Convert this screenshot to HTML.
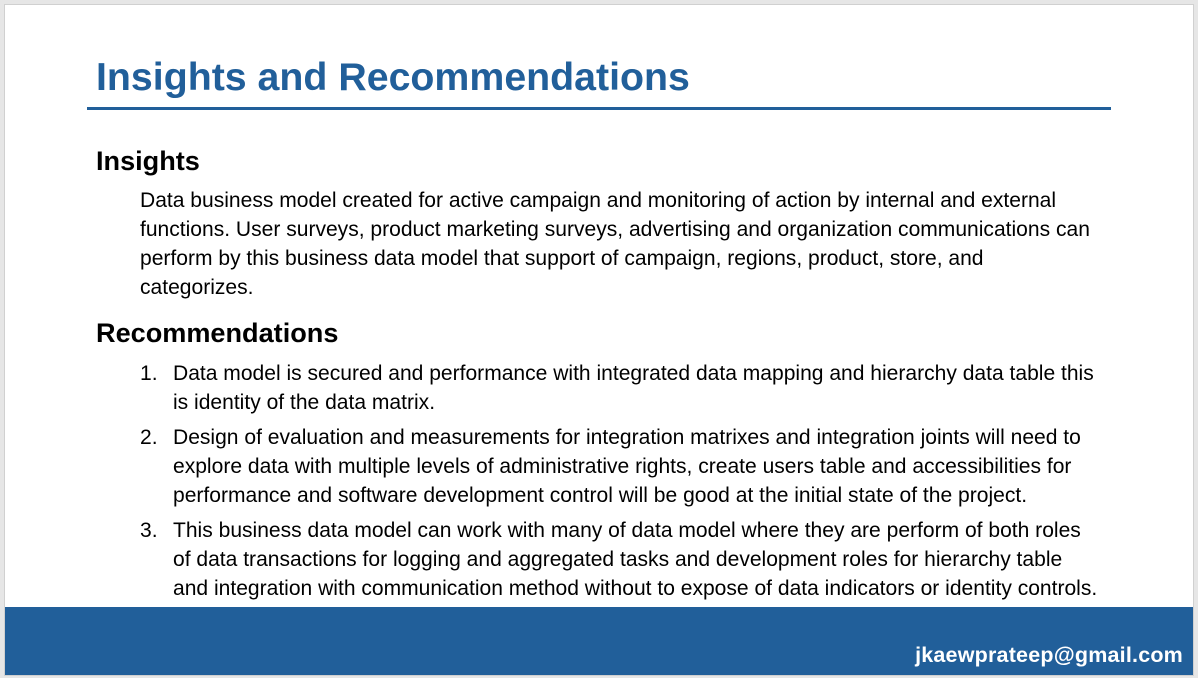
<!DOCTYPE html>
<html><head><style>
body{margin:0;width:1198px;height:678px;background:#e6e6e6;position:relative;overflow:hidden;font-family:"Liberation Sans",Arial,sans-serif;}
.slide{position:absolute;left:5px;top:5px;width:1188px;height:670px;background:#fff;box-shadow:0 0 0 1px #d0d0d0;}
.t{position:absolute;left:91px;top:50px;font-size:39.3px;font-weight:bold;color:#215f9a;white-space:nowrap;}
.rule{position:absolute;left:82px;top:102px;width:1024px;height:3px;background:#215f9a;}
h2{position:absolute;margin:0;font-size:27.1px;font-weight:bold;color:#000;left:91px;white-space:nowrap;}
.p{position:absolute;left:135px;font-size:21.05px;line-height:29px;color:#000;white-space:nowrap;}
.li{position:absolute;left:135px;font-size:21.05px;line-height:29px;color:#000;white-space:nowrap;}
.li span{position:absolute;left:0;}
.li div{margin-left:33px;}
.band{position:absolute;left:0;top:602px;width:1188px;height:68px;background:#215f9a;}
.mail{position:absolute;right:10px;top:36px;color:#fff;font-weight:bold;font-size:21.5px;letter-spacing:0.2px;}
</style></head><body>
<div class="slide">
<div class="t">Insights and Recommendations</div>
<div class="rule"></div>
<h2 style="top:140px">Insights</h2>
<div class="p" style="top:181px">Data business model created for active campaign and monitoring of action by internal and external<br>functions. User surveys, product marketing surveys, advertising and organization communications can<br>perform by this business data model that support of campaign, regions, product, store, and<br>categorizes.</div>
<h2 style="top:312px">Recommendations</h2>
<div class="li" style="top:354px"><span>1.</span><div>Data model is secured and performance with integrated data mapping and hierarchy data table this<br>is identity of the data matrix.</div></div>
<div class="li" style="top:418px"><span>2.</span><div>Design of evaluation and measurements for integration matrixes and integration joints will need to<br>explore data with multiple levels of administrative rights, create users table and accessibilities for<br>performance and software development control will be good at the initial state of the project.</div></div>
<div class="li" style="top:511px"><span>3.</span><div>This business data model can work with many of data model where they are perform of both roles<br>of data transactions for logging and aggregated tasks and development roles for hierarchy table<br>and integration with communication method without to expose of data indicators or identity controls.</div></div>
<div class="band"><div class="mail">jkaewprateep@gmail.com</div></div>
</div>
</body></html>
